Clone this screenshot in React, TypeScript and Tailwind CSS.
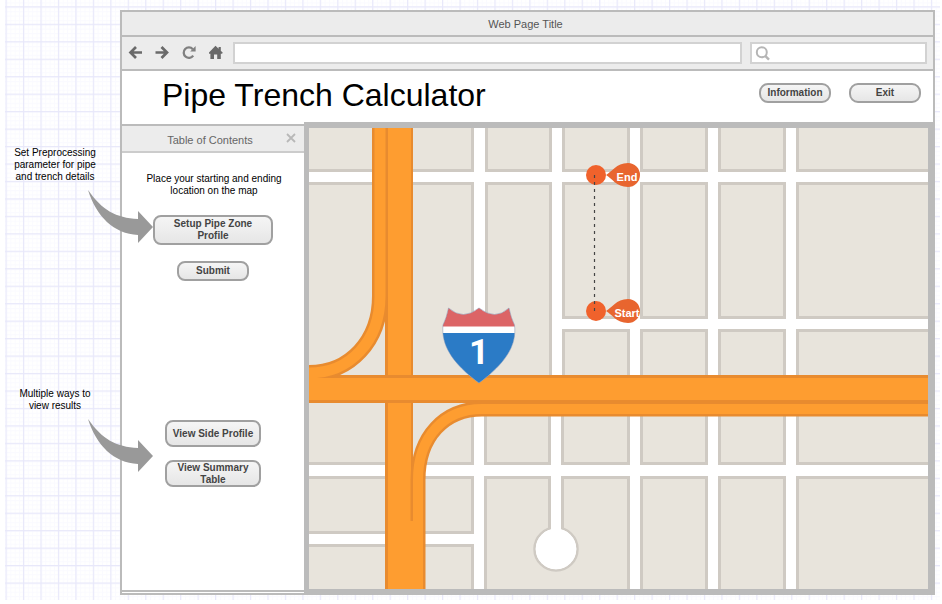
import { useId } from "react";
import type { ReactNode } from "react";

type Block = [x1: number, y1: number, x2: number, y2: number];

const CITY_BLOCKS: Block[] = [
  [300, 120, 474, 172],
  [485, 120, 552, 172],
  [562, 120, 630, 172],
  [640, 120, 708, 172],
  [718, 120, 786, 172],
  [796, 120, 940, 172],
  [300, 182, 474, 390],
  [485, 182, 552, 390],
  [562, 182, 630, 319],
  [640, 182, 708, 319],
  [718, 182, 786, 319],
  [796, 182, 940, 319],
  [562, 329, 630, 390],
  [640, 329, 708, 390],
  [718, 329, 786, 390],
  [796, 329, 940, 390],
  [300, 390, 474, 465],
  [484, 390, 551, 465],
  [561, 390, 630, 465],
  [640, 390, 708, 465],
  [718, 390, 786, 465],
  [796, 390, 940, 465],
  [300, 476, 474, 534],
  [300, 544, 474, 600],
  [484, 476, 630, 600],
  [640, 476, 708, 600],
  [718, 476, 786, 600],
  [796, 476, 940, 600],
];

const RAMP_NORTH = "M380 120 V296 C380 341 350 373 309 373 H300";
const RAMP_SOUTH = "M940 409 H482 C445 409 418 436 418 480 V600";
const SHIELD =
  "M448.5 308 Q463 321 479 308 Q495 321 509 308 Q511 318 514.5 325 C517 345 506 363 479 383 C452 363 441 345 443 325 Q446.5 318 448.5 308Z";

function GridPaper() {
  const minor = useId();
  const major = useId();
  return (
    <svg aria-hidden="true" className="absolute inset-0 -z-10 h-full w-full pr-0.5 pb-1 pl-[5px]">
      <defs>
        <pattern id={minor} x="1" y="6.8" width="4.365" height="4.365" patternUnits="userSpaceOnUse">
          <path d="M0 0.5 H4.365 M0.5 0 V4.365" stroke="#fafaff" strokeWidth="1" />
        </pattern>
        <pattern id={major} x="0.5" y="6.3" width="17.46" height="17.46" patternUnits="userSpaceOnUse">
          <path d="M0 0.6 H17.46 M0.6 0 V17.46" stroke="#e8e8fa" strokeWidth="1.2" />
        </pattern>
      </defs>
      <rect width="100%" height="100%" fill={`url(#${minor})`} />
      <rect width="100%" height="100%" fill={`url(#${major})`} />
    </svg>
  );
}

function PillButton({ className, children }: { className: string; children: ReactNode }) {
  return (
    <button
      type="button"
      className={`flex shrink-0 items-center justify-center border-2 border-[#a0a0a0] bg-linear-to-b from-[#f5f5f5] to-[#e6e6e6] text-center leading-3 font-bold whitespace-nowrap text-[#444] ${className}`}
    >
      {children}
    </button>
  );
}

function Note({ children }: { children: ReactNode }) {
  return (
    <div className="relative w-[110px] text-center text-[10px] leading-3 text-black">
      <p>{children}</p>
      <svg
        aria-hidden="true"
        className="absolute top-full left-[88px] mt-[7px] h-[54px] w-[66px]"
        viewBox="0 0 66 54"
      >
        <path d="M0 0 C14 20 28 28 50 29 V21 L65 37 L50 53 V45 C26 44 8 26 0 0Z" fill="#999" />
      </svg>
    </div>
  );
}

function Pin({ y, label }: { y: number; label: string }) {
  return (
    <g>
      <circle cx="596" cy={y} r="10" fill="#f0622c" />
      <path
        d={`M606 ${y} C612 ${y - 3} 616 ${y - 12} 628 ${y - 12} A12 12 0 0 1 628 ${y + 12} C616 ${y + 12} 612 ${y + 3} 606 ${y}Z`}
        fill="#e8652f"
      />
      <text x="627" y={y + 6} textAnchor="middle" fontSize="11" fontWeight="700" fill="#fff">
        {label}
      </text>
    </g>
  );
}

function StreetMap() {
  const shield = useId();
  return (
    <svg
      role="img"
      aria-label="Street map"
      viewBox="309 128 619 461"
      preserveAspectRatio="xMidYMid slice"
      className="min-w-0 flex-1 bg-white"
    >
      <g fill="#e8e4dc" stroke="#cfcac3" strokeWidth="3">
        {CITY_BLOCKS.map(([x1, y1, x2, y2]) => (
          <rect key={`${x1}-${y1}`} x={x1 + 1.5} y={y1 + 1.5} width={x2 - x1 - 3} height={y2 - y1 - 3} />
        ))}
        <circle cx="556" cy="549" r="21.5" fill="#fff" strokeWidth="2.5" />
        <path d="M549.5 477 V529 M562.5 477 V529" />
      </g>
      <circle cx="556" cy="549" r="20.3" fill="#fff" />
      <rect x="551" y="470" width="10" height="66" fill="#fff" />

      <g fill="#e88b2f">
        <rect x="373" y="120" width="40" height="180" />
        <rect x="385" y="120" width="28" height="480" />
        <rect x="385" y="480" width="40" height="120" />
      </g>
      <rect x="388" y="120" width="23" height="480" fill="#fe9d30" />
      <rect x="300" y="375" width="640" height="28" fill="#e88b2f" />
      <g fill="none">
        <path d={RAMP_NORTH} stroke="#e88b2f" strokeWidth="16" />
        <path d={RAMP_SOUTH} stroke="#e88b2f" strokeWidth="15" />
        <path d={RAMP_NORTH} stroke="#fe9d30" strokeWidth="11" />
        <path d={RAMP_SOUTH} stroke="#fe9d30" strokeWidth="10" />
      </g>
      <rect x="300" y="378" width="640" height="22" fill="#fe9d30" />
      <rect x="388" y="521" width="35" height="80" fill="#fe9d30" />

      <clipPath id={shield}>
        <path d={SHIELD} />
      </clipPath>
      <g clipPath={`url(#${shield})`}>
        <rect x="440" y="300" width="80" height="90" fill="#fff" />
        <rect x="440" y="300" width="80" height="26.5" fill="#dc6466" />
        <rect x="440" y="333" width="80" height="60" fill="#2b7bc6" />
      </g>
      <path d={SHIELD} fill="none" stroke="#7b8fb0" strokeOpacity="0.6" strokeWidth="0.8" />
      <text
        x="479"
        y="364"
        textAnchor="middle"
        fontSize="35"
        className="font-[Roboto,sans-serif] font-bold"
        fill="#fff"
      >
        1
      </text>

      <Pin y={175} label="End" />
      <Pin y={311} label="Start" />
      <path d="M594.5 175 V311" stroke="#444" strokeWidth="1.2" strokeDasharray="3 4" />
    </svg>
  );
}

function ToolButton({ label, children }: { label: string; children: ReactNode }) {
  return (
    <button type="button" aria-label={label} className="flex size-[15px] items-center justify-center">
      <svg viewBox="0 0 15 15" className="size-[15px]" fill="none" stroke="#6a6a6a" aria-hidden="true">
        {children}
      </svg>
    </button>
  );
}

function BrowserToolbar() {
  return (
    <div className="flex h-[34px] shrink-0 items-center border-b-2 border-[#bbb] bg-[#ececec] px-1.5">
      <nav aria-label="Browser" className="flex gap-3 pb-0.5">
        <ToolButton label="Back">
          <path d="M14 7.5 H3 M8 2 L2.5 7.5 L8 13" strokeWidth="2.7" />
        </ToolButton>
        <ToolButton label="Forward">
          <path d="M0.5 7.5 H11.5 M6.5 2 L12 7.5 L6.5 13" strokeWidth="2.7" />
        </ToolButton>
        <ToolButton label="Reload">
          <path d="M10.8 4.2 A5.2 5.2 0 1 0 11.2 10.6" stroke="#808080" strokeWidth="2.3" />
          <path d="M13.6 1 V6.4 H8.2Z" fill="#808080" stroke="none" />
        </ToolButton>
        <ToolButton label="Home">
          <path
            d="M6.5 0.8 L9.6 3.7 V2 H11.8 V5.8 L13.8 7.8 L13 8.8 H11.8 V14 H8.2 V9.6 H5 V14 H1.4 V8.8 H0.2 L-0.4 7.8Z"
            fill="#6a6a6a"
            stroke="none"
          />
        </ToolButton>
      </nav>
      <input
        type="text"
        aria-label="Address"
        className="ml-[9px] h-[22px] min-w-0 flex-1 border-2 border-[#d2d2d2] bg-white px-1.5 text-[11px] text-[#444] outline-none"
      />
      <label className="ml-2 flex h-[22px] w-[177px] items-center border-2 border-[#d2d2d2] bg-white pl-[3px]">
        <svg viewBox="0 0 15 15" className="size-[15px] shrink-0" aria-hidden="true">
          <circle cx="6.8" cy="6.3" r="5" fill="none" stroke="#b5b5b5" strokeWidth="2" />
          <path d="M10.2 9.8 L14 13.6" stroke="#b5b5b5" strokeWidth="2.4" />
        </svg>
        <input
          type="search"
          aria-label="Search"
          className="min-w-0 flex-1 bg-transparent px-1 text-[11px] text-[#444] outline-none"
        />
      </label>
    </div>
  );
}

function ContentsPanel() {
  return (
    <aside className="mt-0.5 mb-px flex w-[182px] shrink-0 flex-col border-y-2 border-[#bbb]">
      <div className="flex h-[27px] shrink-0 items-center border-b-2 border-[#ccc] bg-[#ececec] px-1.5 pl-[14px]">
        <h2 className="flex-1 pt-0.5 text-center text-[11px] leading-3 text-[#666]">Table of Contents</h2>
        <button type="button" aria-label="Close" className="mb-0.5 flex size-[14px] items-center justify-center">
          <svg viewBox="0 0 10 10" className="size-[10px]" aria-hidden="true">
            <path d="M1 1 L9 9 M9 1 L1 9" stroke="#b8b8b8" strokeWidth="1.8" />
          </svg>
        </button>
      </div>
      <div className="flex flex-col items-center pt-5 text-[10px]">
        <p className="pl-0.5 text-center leading-3 text-black">
          Place your starting and ending
          <br />
          location on the map
        </p>
        <PillButton className="mt-[18px] h-[30px] w-[120px] rounded-[8px]">
          Setup Pipe Zone
          <br />
          Profile
        </PillButton>
        <PillButton className="mt-4 h-5 w-[72px] rounded-[8px]">Submit</PillButton>
        <PillButton className="mt-[139px] h-[27px] w-[96px] rounded-[8px]">View Side Profile</PillButton>
        <PillButton className="mt-[13px] h-[27px] w-[96px] rounded-[8px]">
          View Summary
          <br />
          Table
        </PillButton>
      </div>
    </aside>
  );
}

export default function App() {
  return (
    <div className="relative isolate flex min-h-screen bg-white font-['Liberation_Sans',Arial,sans-serif]">
      <GridPaper />
      <div className="z-10 flex w-[120px] shrink-0 flex-col gap-[205px] pt-[147px]">
        <Note>
          Set Preprocessing
          <br />
          parameter for pipe
          <br />
          and trench details
        </Note>
        <Note>
          Multiple ways to
          <br />
          view results
        </Note>
      </div>

      <div className="mt-[10px] mr-[7px] mb-[9px] flex min-w-0 flex-1 flex-col border-2 border-[#bbb] bg-white">
        <div className="flex h-[25px] shrink-0 items-center justify-center border-b-2 border-[#bbb] bg-[#ececec] pr-1 text-[11px] leading-3 text-[#555]">
          Web Page Title
        </div>
        <BrowserToolbar />
        <header className="flex h-[51px] shrink-0 items-center pr-3 pb-1 pl-10">
          <h1 className="flex-1 text-[32px] leading-9 whitespace-nowrap text-black">Pipe Trench Calculator</h1>
          <div className="mb-1 flex gap-[18px] text-[10px]">
            <PillButton className="h-5 w-[72px] rounded-[9px]">Information</PillButton>
            <PillButton className="h-5 w-[72px] rounded-[9px]">Exit</PillButton>
          </div>
        </header>
        <div className="flex flex-1">
          <ContentsPanel />
          <main className="flex min-w-0 flex-1 border-t-[6px] border-r-[5px] border-b-4 border-l-[5px] border-[#bbb]">
            <StreetMap />
          </main>
        </div>
      </div>
    </div>
  );
}
